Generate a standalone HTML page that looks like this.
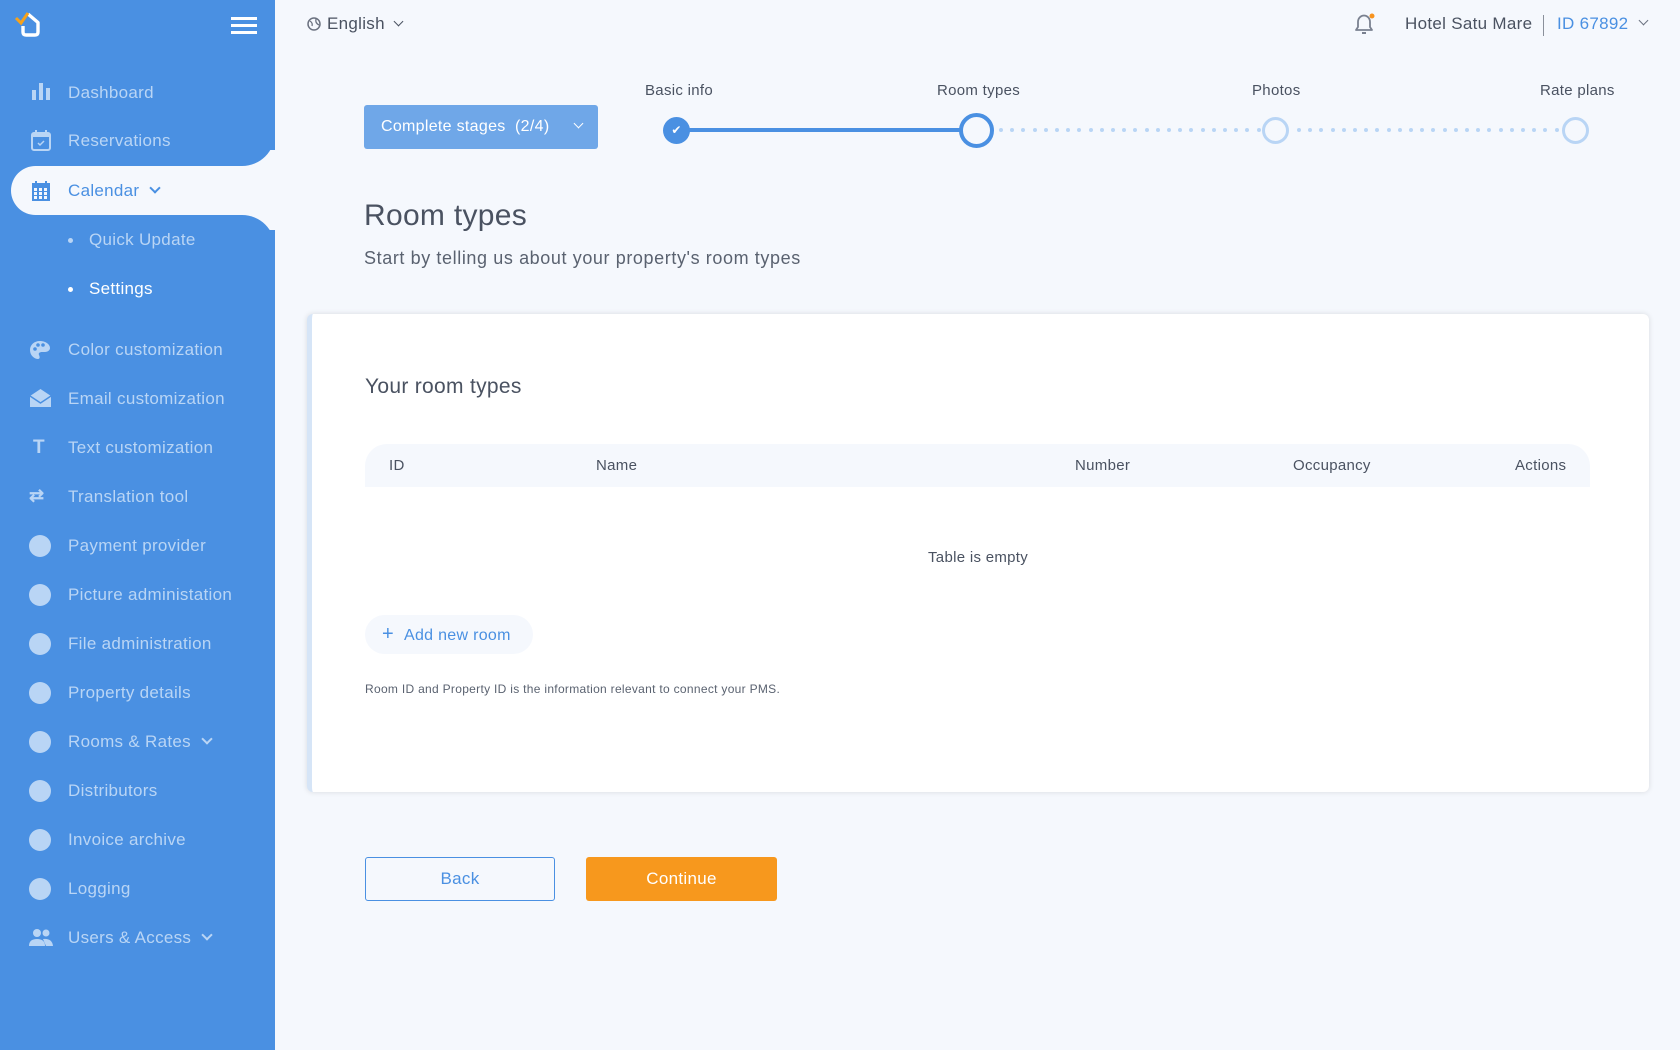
<!DOCTYPE html>
<html><head><meta charset="utf-8"><style>
*{margin:0;padding:0;box-sizing:border-box}
body{width:1680px;height:1050px;background:#f5f8fd;font-family:"Liberation Sans",sans-serif;position:relative;overflow:hidden;color:#4a5261;letter-spacing:0.3px}
.sb{position:absolute;left:0;top:0;width:275px;height:1050px;background:#4a90e2}
.it{position:absolute;left:68px;font-size:17px;color:#b9d5f5;transform:translateY(-50%);white-space:nowrap}
.ic{position:absolute;left:29px;width:22px;height:22px;border-radius:50%;background:#b9d5f5;transform:translateY(-50%)}
.abs{position:absolute}
.chev{display:inline-block;width:8px;height:8px;border-right:2px solid currentColor;border-bottom:2px solid currentColor;transform:rotate(45deg);margin-left:12px;position:relative;top:-4px}
.dot{position:absolute;top:128px;width:4px;height:4px;border-radius:50%;background:#b9d5f5}
</style></head><body>
<div class="sb">
  <svg class="abs" style="left:14px;top:10px" width="30" height="28" viewBox="0 0 30 28"><path d="M14 4 L24 12.5 V22 Q24 25 21 25 H12 Q9 25 9 22 V16" fill="none" stroke="#fff" stroke-width="3.4" stroke-linejoin="round"/><path d="M2 8 L7 13 L14 3" fill="none" stroke="#f7a21b" stroke-width="3"/></svg>
  <div class="abs" style="left:231px;top:17px;width:26px;height:3px;background:#fff"></div>
  <div class="abs" style="left:231px;top:24px;width:26px;height:3px;background:#fff"></div>
  <div class="abs" style="left:231px;top:31px;width:26px;height:3px;background:#fff"></div>

  <div class="abs" style="left:241px;top:150px;width:34px;height:80px;background:#f5f8fd"></div>
  <div class="abs" style="left:200px;top:100px;width:75px;height:66px;background:#4a90e2;border-bottom-right-radius:33px"></div>
  <div class="abs" style="left:200px;top:215px;width:75px;height:66px;background:#4a90e2;border-top-right-radius:33px"></div>
  <div class="abs" style="left:11px;top:166px;width:264px;height:49px;background:#f5f8fd;border-radius:25px 0 0 25px"></div>

  <svg class="abs" style="left:32px;top:83px" width="18" height="17"><rect x="0" y="7" width="4" height="10" fill="#b9d5f5"/><rect x="7" y="0" width="4" height="17" fill="#b9d5f5"/><rect x="14" y="5" width="4" height="12" fill="#b9d5f5"/></svg>
  <div class="it" style="top:93px">Dashboard</div>
  <svg class="abs" style="left:31px;top:130px" width="20" height="21"><rect x="1" y="3" width="18" height="17" rx="2" fill="none" stroke="#b9d5f5" stroke-width="2"/><rect x="1" y="3" width="18" height="4" fill="#b9d5f5"/><rect x="4" y="0" width="2" height="4" fill="#b9d5f5"/><rect x="14" y="0" width="2" height="4" fill="#b9d5f5"/><path d="M7 13 l2 2 l4 -4" stroke="#b9d5f5" stroke-width="1.5" fill="none"/></svg>
  <div class="it" style="top:141px">Reservations</div>
  <svg class="abs" style="left:32px;top:181px" width="18" height="20"><rect x="0" y="2" width="18" height="18" fill="#4a90e2"/><g fill="#f5f8fd"><rect x="2" y="7" width="3" height="3"/><rect x="7" y="7" width="3" height="3"/><rect x="12" y="7" width="3" height="3"/><rect x="2" y="11" width="3" height="3"/><rect x="7" y="11" width="3" height="3"/><rect x="12" y="11" width="3" height="3"/><rect x="2" y="15" width="3" height="3"/><rect x="7" y="15" width="3" height="3"/><rect x="12" y="15" width="3" height="3"/></g><rect x="3" y="0" width="2" height="4" fill="#4a90e2"/><rect x="13" y="0" width="2" height="4" fill="#4a90e2"/></svg>
  <div class="it" style="top:191px;color:#4a90e2">Calendar<span class="chev"></span></div>
  <div class="abs" style="left:68px;top:238px;width:5px;height:5px;border-radius:50%;background:#b9d5f5"></div>
  <div class="it" style="top:240px;left:89px">Quick Update</div>
  <div class="abs" style="left:68px;top:287px;width:5px;height:5px;border-radius:50%;background:#fff"></div>
  <div class="it" style="top:289px;left:89px;color:#fff">Settings</div>

  <svg class="abs" style="left:30px;top:340px" width="20" height="20"><path d="M10 1 C4 1 0 5 0 10 C0 16 5 19 8 19 C10 19 10 17 9 15 C8 13 10 12 12 12 H15 C18 12 20 10 20 8 C20 4 15 1 10 1Z" fill="#b9d5f5"/><circle cx="5" cy="9" r="1.8" fill="#4a90e2"/><circle cx="8" cy="5" r="1.8" fill="#4a90e2"/><circle cx="13" cy="5" r="1.8" fill="#4a90e2"/></svg>
  <div class="it" style="top:350px">Color customization</div>
  <svg class="abs" style="left:30px;top:388px" width="21" height="20"><path d="M0 8 L10.5 1 L21 8 V19 H0Z" fill="#b9d5f5"/><path d="M0 8 L10.5 15 L21 8" fill="none" stroke="#4a90e2" stroke-width="1.5"/></svg>
  <div class="it" style="top:399px">Email customization</div>
  <div class="it" style="top:448px;left:33px;font-weight:bold;font-size:19px">T</div>
  <div class="it" style="top:448px">Text customization</div>
  <div class="it" style="top:496px;left:29px;font-size:18px;font-weight:bold">⇄</div>
  <div class="it" style="top:497px">Translation tool</div>
  <div class="ic" style="top:546px"></div><div class="it" style="top:546px">Payment provider</div>
  <div class="ic" style="top:595px"></div><div class="it" style="top:595px">Picture administation</div>
  <div class="ic" style="top:644px"></div><div class="it" style="top:644px">File administration</div>
  <div class="ic" style="top:693px"></div><div class="it" style="top:693px">Property details</div>
  <div class="ic" style="top:742px"></div><div class="it" style="top:742px">Rooms &amp; Rates<span class="chev"></span></div>
  <div class="ic" style="top:791px"></div><div class="it" style="top:791px">Distributors</div>
  <div class="ic" style="top:840px"></div><div class="it" style="top:840px">Invoice archive</div>
  <div class="ic" style="top:889px"></div><div class="it" style="top:889px">Logging</div>
  <svg class="abs" style="left:29px;top:929px" width="24" height="17"><circle cx="8" cy="4" r="4" fill="#b9d5f5"/><circle cx="17" cy="4" r="3.5" fill="#b9d5f5"/><path d="M0 17 Q0 10 8 10 Q16 10 16 17Z" fill="#b9d5f5"/><path d="M14 10 Q23 9 24 17 H17Z" fill="#b9d5f5"/></svg>
  <div class="it" style="top:938px">Users &amp; Access<span class="chev"></span></div>
</div>

<!-- top bar -->
<svg class="abs" style="left:307px;top:17px" width="14" height="14"><circle cx="7" cy="7" r="6" fill="none" stroke="#6b7280" stroke-width="1.5"/><path d="M3 4 Q6 6 5 9 M9 2 Q8 6 12 8" stroke="#6b7280" stroke-width="1.3" fill="none"/></svg>
<div class="abs" style="left:327px;top:14px;font-size:17px;color:#4a5261">English<span class="chev" style="width:7px;height:7px;border-width:1.5px;margin-left:10px"></span></div>
<svg class="abs" style="left:1352px;top:12px" width="24" height="24"><path d="M4 18 H20 L18 15 V10 C18 6 15 3.5 12 3.5 C9 3.5 6 6 6 10 V15Z" fill="none" stroke="#7a8190" stroke-width="1.8" stroke-linejoin="round"/><path d="M10 21 H14" stroke="#7a8190" stroke-width="2"/><circle cx="20" cy="4" r="2.5" fill="#f7931e"/></svg>
<div class="abs" style="left:1405px;top:14px;font-size:17px;color:#4a5261">Hotel Satu Mare</div>
<div class="abs" style="left:1543px;top:15px;width:1px;height:21px;background:#8a909b"></div>
<div class="abs" style="left:1557px;top:14px;font-size:17px;color:#4a90e2">ID 67892</div>
<div class="abs" style="left:1640px;top:15px;color:#6b7280"><span class="chev" style="width:7px;height:7px;border-width:1.5px;margin:0"></span></div>

<!-- stages button -->
<div class="abs" style="left:364px;top:105px;width:234px;height:44px;background:#6fa7e8;border-radius:3px;color:#fff;font-size:16px;line-height:44px;padding-left:17px">Complete stages&nbsp; (2/4)<span class="chev" style="width:7px;height:7px;border-width:1.3px;margin-left:26px"></span></div>

<!-- stepper -->
<div class="abs" style="left:645px;top:82px;font-size:15px">Basic info</div>
<div class="abs" style="left:937px;top:82px;font-size:15px">Room types</div>
<div class="abs" style="left:1252px;top:82px;font-size:15px">Photos</div>
<div class="abs" style="left:1540px;top:82px;font-size:15px">Rate plans</div>
<div class="abs" style="left:676px;top:128px;width:290px;height:4px;background:#4a90e2"></div>
<div class="abs" style="left:663px;top:117px;width:27px;height:27px;border-radius:50%;background:#4a90e2;color:#fff;font-size:12px;text-align:center;line-height:27px">✔</div>
<div class="abs" style="left:959px;top:113px;width:35px;height:35px;border-radius:50%;border:4px solid #4a90e2;background:#f5f8fd"></div>
<div class="abs" style="left:1262px;top:117px;width:27px;height:27px;border-radius:50%;border:3.5px solid #b9d5f5"></div>
<div class="abs" style="left:1562px;top:117px;width:27px;height:27px;border-radius:50%;border:3.5px solid #b9d5f5"></div>
<div id="dots"></div>

<div class="abs" style="left:364px;top:199px;font-size:30px;color:#4a5261">Room types</div>
<div class="abs" style="left:364px;top:248px;font-size:18px;color:#5a6270;letter-spacing:0.6px">Start by telling us about your property's room types</div>

<!-- card -->
<div class="abs" style="left:307px;top:314px;width:1342px;height:478px;background:#fff;border-radius:6px;border-left:5px solid #d6e5f7;box-shadow:0 0 6px rgba(0,0,0,0.12)"></div>
<div class="abs" style="left:365px;top:375px;font-size:21px;color:#4a5261">Your room types</div>
<div class="abs" style="left:365px;top:444px;width:1225px;height:43px;background:#f5f8fd;border-radius:22px 22px 0 0"></div>
<div class="abs" style="left:389px;top:457px;font-size:15px">ID</div>
<div class="abs" style="left:596px;top:457px;font-size:15px">Name</div>
<div class="abs" style="left:1075px;top:457px;font-size:15px">Number</div>
<div class="abs" style="left:1293px;top:457px;font-size:15px">Occupancy</div>
<div class="abs" style="left:1515px;top:457px;font-size:15px">Actions</div>
<div class="abs" style="left:928px;top:549px;font-size:15px">Table is empty</div>
<div class="abs" style="left:365px;top:615px;width:168px;height:39px;background:#f5f8fd;border-radius:20px;color:#4a90e2;font-size:16px;line-height:39px;padding-left:17px"><span style="font-size:20px;margin-right:10px">+</span>Add new room</div>
<div class="abs" style="left:365px;top:682px;font-size:12px;color:#5a6270">Room ID and Property ID is the information relevant to connect your PMS.</div>

<div class="abs" style="left:365px;top:857px;width:190px;height:44px;border:1.5px solid #4a90e2;border-radius:3px;color:#4a90e2;font-size:17px;text-align:center;line-height:41px">Back</div>
<div class="abs" style="left:586px;top:857px;width:191px;height:44px;background:#f7981d;border-radius:3px;color:#fff;font-size:17px;text-align:center;line-height:44px">Continue</div>

<script>
var h='';for(var x=999;x<1258;x+=11.2)h+='<div class="dot" style="left:'+x.toFixed(0)+'px"></div>';
for(var x=1297;x<1557;x+=11.2)h+='<div class="dot" style="left:'+x.toFixed(0)+'px"></div>';
document.getElementById('dots').innerHTML=h;
</script>
</body></html>
